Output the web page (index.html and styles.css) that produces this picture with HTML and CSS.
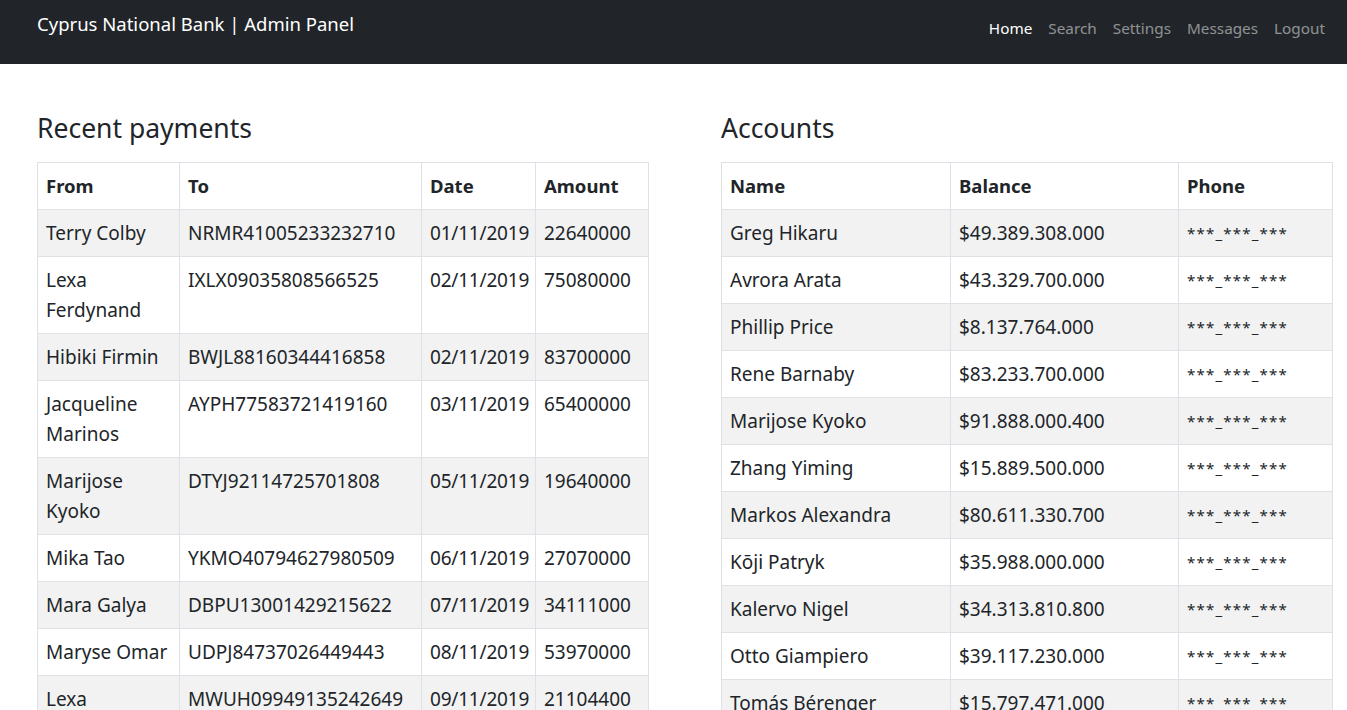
FILE: index.html
```
<!DOCTYPE html>
<html lang="en">
<head>
<meta charset="utf-8">
<title>Cyprus National Bank | Admin Panel</title>
<link rel="stylesheet" href="styles.css">
</head>
<body>
<nav class="navbar">
  <a class="brand" href="#">Cyprus National Bank | Admin Panel</a>
  <ul class="nav-links">
    <li><a class="active" href="#">Home</a></li>
    <li><a href="#">Search</a></li>
    <li><a href="#">Settings</a></li>
    <li><a href="#">Messages</a></li>
    <li><a href="#">Logout</a></li>
  </ul>
</nav>
<main class="content">
  <section class="panel">
    <h3 class="title">Recent payments</h3>
    <table class="table payments">
      <thead>
        <tr><th class="c-from">From</th><th class="c-to">To</th><th class="c-date">Date</th><th class="c-amt">Amount</th></tr>
      </thead>
      <tbody>
        <tr><td>Terry Colby</td><td>NRMR41005233232710</td><td class="nw">01/11/2019</td><td>22640000</td></tr>
        <tr><td>Lexa Ferdynand</td><td>IXLX09035808566525</td><td class="nw">02/11/2019</td><td>75080000</td></tr>
        <tr><td>Hibiki Firmin</td><td>BWJL88160344416858</td><td class="nw">02/11/2019</td><td>83700000</td></tr>
        <tr><td>Jacqueline Marinos</td><td>AYPH77583721419160</td><td class="nw">03/11/2019</td><td>65400000</td></tr>
        <tr><td>Marijose Kyoko</td><td>DTYJ92114725701808</td><td class="nw">05/11/2019</td><td>19640000</td></tr>
        <tr><td>Mika Tao</td><td>YKMO40794627980509</td><td class="nw">06/11/2019</td><td>27070000</td></tr>
        <tr><td>Mara Galya</td><td>DBPU13001429215622</td><td class="nw">07/11/2019</td><td>34111000</td></tr>
        <tr><td>Maryse Omar</td><td>UDPJ84737026449443</td><td class="nw">08/11/2019</td><td>53970000</td></tr>
        <tr><td>Lexa Ferdynand</td><td>MWUH09949135242649</td><td class="nw">09/11/2019</td><td>21104400</td></tr>
      </tbody>
    </table>
  </section>
  <section class="panel">
    <h3 class="title">Accounts</h3>
    <table class="table accounts">
      <thead>
        <tr><th class="c-name">Name</th><th class="c-bal">Balance</th><th class="c-phone">Phone</th></tr>
      </thead>
      <tbody>
        <tr><td>Greg Hikaru</td><td>$49.389.308.000</td><td class="phone">***_***_***</td></tr>
        <tr><td>Avrora Arata</td><td>$43.329.700.000</td><td class="phone">***_***_***</td></tr>
        <tr><td>Phillip Price</td><td>$8.137.764.000</td><td class="phone">***_***_***</td></tr>
        <tr><td>Rene Barnaby</td><td>$83.233.700.000</td><td class="phone">***_***_***</td></tr>
        <tr><td>Marijose Kyoko</td><td>$91.888.000.400</td><td class="phone">***_***_***</td></tr>
        <tr><td>Zhang Yiming</td><td>$15.889.500.000</td><td class="phone">***_***_***</td></tr>
        <tr><td>Markos Alexandra</td><td>$80.611.330.700</td><td class="phone">***_***_***</td></tr>
        <tr><td>Kōji Patryk</td><td>$35.988.000.000</td><td class="phone">***_***_***</td></tr>
        <tr><td>Kalervo Nigel</td><td>$34.313.810.800</td><td class="phone">***_***_***</td></tr>
        <tr><td>Otto Giampiero</td><td>$39.117.230.000</td><td class="phone">***_***_***</td></tr>
        <tr><td>Tomás Bérenger</td><td>$15.797.471.000</td><td class="phone">***_***_***</td></tr>
      </tbody>
    </table>
  </section>
</main>
</body>
</html>
```

FILE: styles.css
```
* { box-sizing: border-box; }
html, body { margin: 0; padding: 0; }
body {
  font-family: "Noto Sans", "Open Sans", sans-serif;
  color: #212529;
  background: #fff;
  font-size: 19px;
  line-height: 30px;
}
.navbar {
  height: 64px;
  background: #212529;
  display: flex;
  justify-content: space-between;
  align-items: flex-start;
  padding: 9px 22px 0 37px;
}
.brand {
  color: #fff;
  text-decoration: none;
  font-size: 18.5px;
  line-height: 30px;
}
.nav-links {
  list-style: none;
  margin: 0;
  padding: 3px 0 0;
  display: flex;
  gap: 16px;
}
.nav-links a {
  color: rgba(255,255,255,.5);
  text-decoration: none;
  font-size: 15.3px;
  line-height: 24px;
}
.nav-links a.active { color: #fff; }
.content {
  display: flex;
  gap: 72px;
  padding: 48px 14px 0 37px;
}
.panel { flex: 1 1 0; min-width: 0; }
.title {
  font-size: 26.5px;
  font-weight: 400;
  line-height: 32px;
  margin: 0 0 18px;
}
.table {
  width: 100%;
  border-collapse: collapse;
  table-layout: fixed;
}
.table th, .table td {
  border: 1px solid #dee2e6;
  padding: 8px;
  text-align: left;
  vertical-align: top;
}
.table th { font-weight: 700; font-size: 18.5px; }
.table tbody tr:nth-child(odd) { background: #f2f2f2; }
.nw { white-space: nowrap; letter-spacing: -0.2px; }
.c-from { width: 142px; }
.c-to { width: 242px; }
.c-date { width: 114px; }
.c-amt { width: 113px; }
.c-name { width: 229px; }
.c-bal { width: 228px; }
.c-phone { width: 154px; }
.phone { font-size: 15px; letter-spacing: 1.2px; }
```
